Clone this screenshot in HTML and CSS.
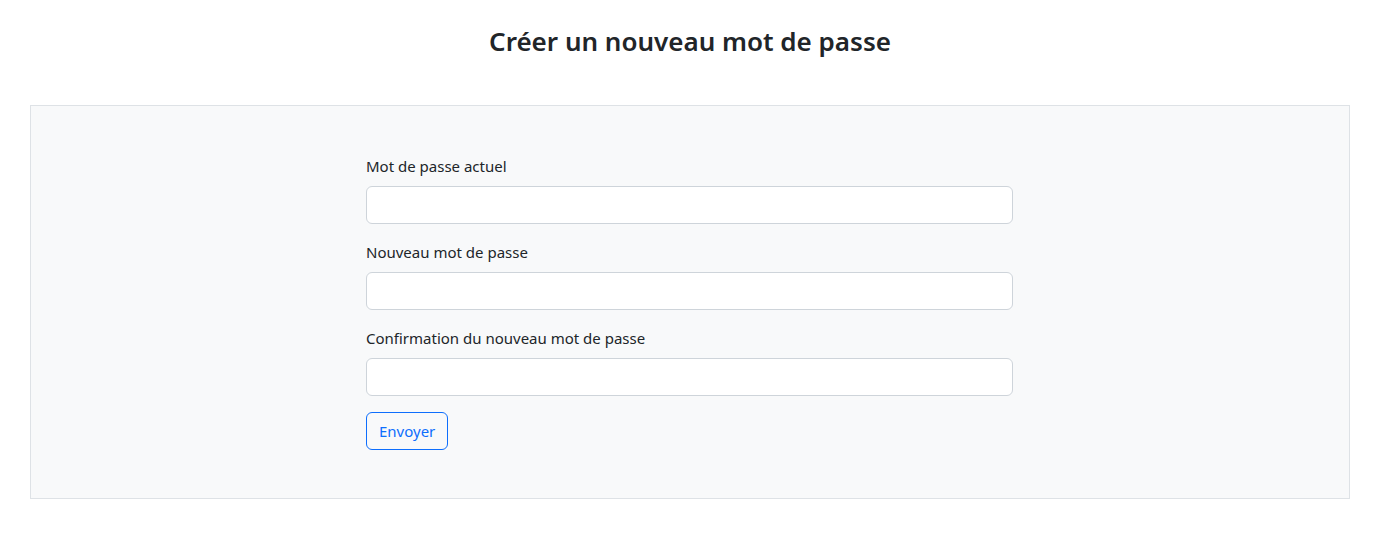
FILE: index.html
```html
<!DOCTYPE html>
<html lang="fr">
<head>
<meta charset="utf-8">
<title>Créer un nouveau mot de passe</title>
<link rel="stylesheet" href="styles.css">
</head>
<body>
<main class="page">
  <h3 class="title">Créer un nouveau mot de passe</h3>
  <section class="panel">
    <form class="form">
      <div class="field">
        <label class="label" for="current">Mot de passe actuel</label>
        <input class="input" type="password" id="current">
      </div>
      <div class="field">
        <label class="label" for="new">Nouveau mot de passe</label>
        <input class="input" type="password" id="new">
      </div>
      <div class="field">
        <label class="label" for="confirm">Confirmation du nouveau mot de passe</label>
        <input class="input" type="password" id="confirm">
      </div>
      <div class="actions">
        <button class="btn" type="submit">Envoyer</button>
      </div>
    </form>
  </section>
</main>
</body>
</html>
```
FILE: styles.css
```css
* { box-sizing: border-box; }
html, body { margin: 0; padding: 0; background: #fff; }
body {
  font-family: "Noto Sans", "Open Sans", sans-serif;
  font-size: 15px;
  line-height: 1.5;
  color: #212529;
}
.page {
  padding: 24px 36px 0 30px;
}
.title {
  margin: 0 0 47px;
  text-align: center;
  font-size: 26px;
  font-weight: 600;
  line-height: 34px;
}
.panel {
  width: 1320px;
  background: #f8f9fa;
  border: 1px solid #dee2e6;
  padding: 48px 0 48px 335px;
  display: flex;
}
.form {
  width: 647px;
  display: flex;
  flex-direction: column;
  gap: 16px;
}
.field { display: flex; flex-direction: column; }
.label { margin-bottom: 8px; line-height: 24px; }
.input {
  height: 38px;
  border: 1px solid #ced4da;
  border-radius: 6px;
  background: #fff;
  padding: 6px 12px;
  font: inherit;
}
.actions { display: flex; }
.btn {
  height: 38px;
  padding: 6px 12px;
  font: inherit;
  line-height: 24px;
  color: #0d6efd;
  background: transparent;
  border: 1px solid #0d6efd;
  border-radius: 6px;
  cursor: pointer;
}
```
